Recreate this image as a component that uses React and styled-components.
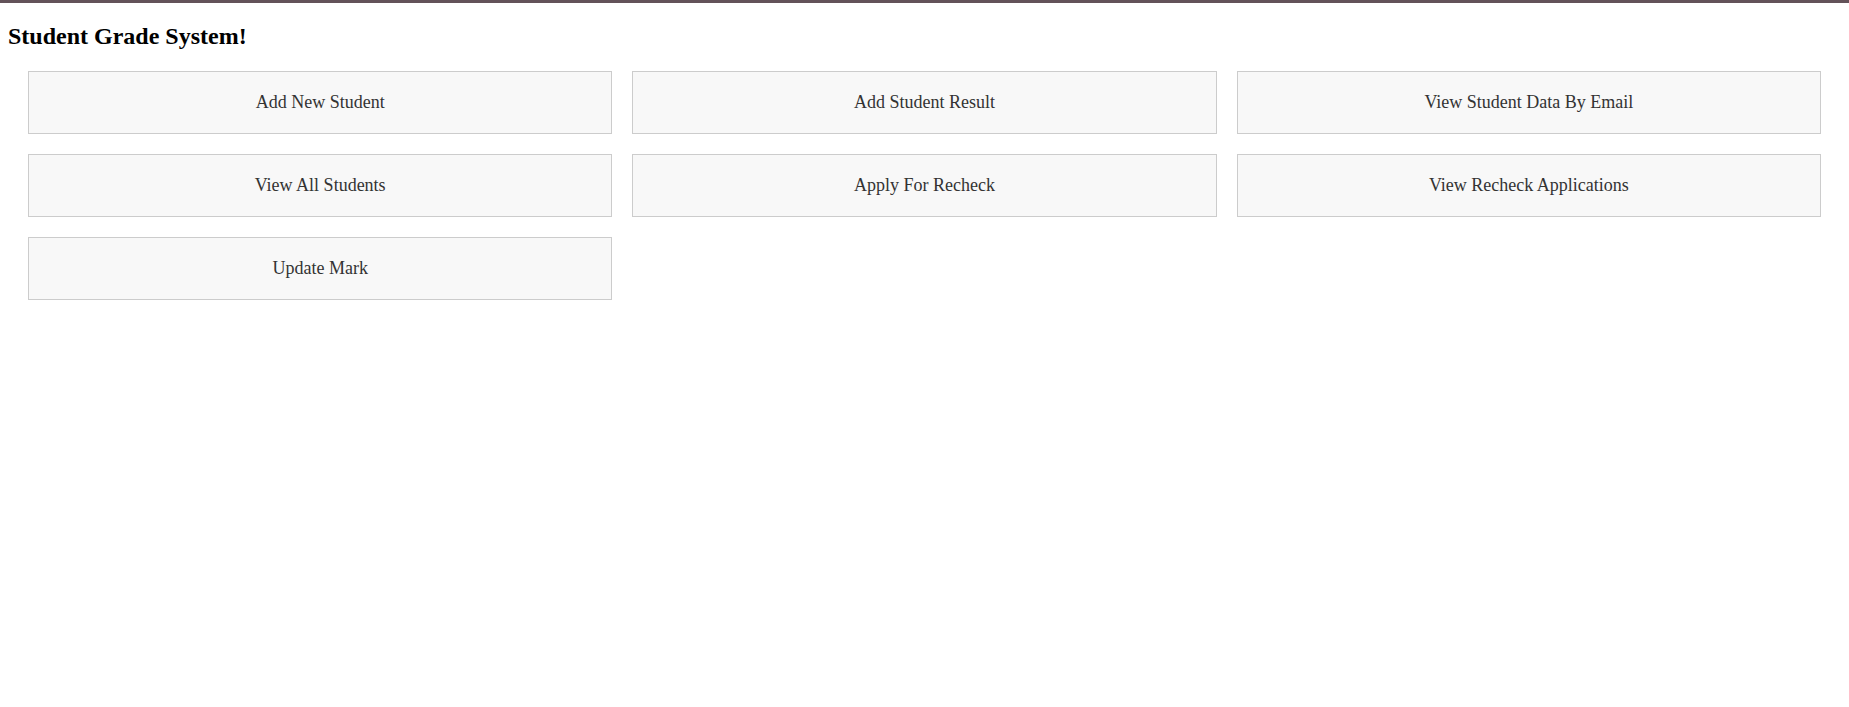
import React from "react";
import styled, { createGlobalStyle } from "styled-components";

const GlobalStyle = createGlobalStyle`
  html, body {
    margin: 0;
    padding: 0;
    background: #ffffff;
  }
  body {
    font-family: "Liberation Serif", "Times New Roman", serif;
  }
`;

const TopBar = styled.div`
  height: 3px;
  background: #635259;
`;

const Main = styled.main`
  padding: 0 8px;
`;

const Title = styled.h2`
  margin: 20px 0 21px;
  font-family: "Liberation Serif", "Times New Roman", serif;
  font-size: 24px;
  font-weight: bold;
  color: #000;
`;

const Grid = styled.div`
  display: grid;
  grid-template-columns: repeat(3, 1fr);
  gap: 20px;
  padding: 0 20px;
`;

const MenuButton = styled.button`
  display: flex;
  align-items: center;
  justify-content: center;
  height: 63px;
  margin: 0;
  padding: 0;
  box-sizing: border-box;
  border: 1px solid #cccccc;
  border-radius: 0;
  background: #f8f8f8;
  color: #333333;
  font-family: "Liberation Serif", "Times New Roman", serif;
  font-size: 18px;
  cursor: pointer;
`;

const items = [
  "Add New Student",
  "Add Student Result",
  "View Student Data By Email",
  "View All Students",
  "Apply For Recheck",
  "View Recheck Applications",
  "Update Mark",
];

export default function App() {
  return (
    <>
      <GlobalStyle />
      <TopBar />
      <Main>
        <Title>Student Grade System!</Title>
        <Grid>
          {items.map((label) => (
            <MenuButton key={label}>{label}</MenuButton>
          ))}
        </Grid>
      </Main>
    </>
  );
}
